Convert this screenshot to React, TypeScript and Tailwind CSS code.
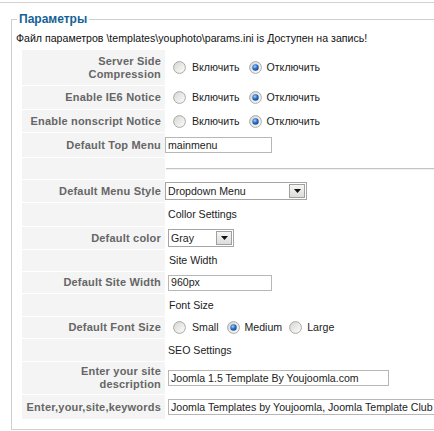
import React from 'react';

const Radio = ({ checked }: { checked?: boolean }) => (
  <svg width="13" height="13" viewBox="0 0 13 13" className="shrink-0">
    <defs>
      <linearGradient id="rg" x1="0" y1="0" x2="1" y2="1">
        <stop offset="0" stopColor="#d4d4cf" />
        <stop offset="1" stopColor="#ffffff" />
      </linearGradient>
      <radialGradient id="dot" cx="0.4" cy="0.35" r="0.75">
        <stop offset="0" stopColor="#a9d6ff" />
        <stop offset="0.45" stopColor="#2f74c8" />
        <stop offset="1" stopColor="#0c3d86" />
      </radialGradient>
    </defs>
    <circle cx="6.5" cy="6.5" r="5.9" fill="url(#rg)" stroke="#a9a9a9" strokeWidth="1" />
    {checked && <circle cx="6.5" cy="6.5" r="3.2" fill="url(#dot)" />}
  </svg>
);

const OnOff = () => (
  <div className="flex items-center pl-[7px]">
    <Radio />
    <span className="ml-[6px]">Включить</span>
    <span className="ml-[9px]"><Radio checked /></span>
    <span className="ml-[5px]">Отключить</span>
  </div>
);

const TextInput = ({ value, w, ml = 'ml-0' }: { value: string; w: string; ml?: string }) => (
  <div className={`${w} ${ml} shrink-0 h-[16px] border border-[#b7b7b7] bg-white flex items-center pl-[2px] whitespace-nowrap overflow-hidden`}>
    {value}
  </div>
);

const Select = ({ value, w, ml = 'ml-0' }: { value: string; w: string; ml?: string }) => (
  <div className={`${w} ${ml} h-[18px] border border-[#a5a5a5] bg-white flex items-stretch`}>
    <span className="flex-1 flex items-center pl-[2px]">{value}</span>
    <span className="w-[16px] m-[1px] border border-[#a0a0a0] bg-gradient-to-b from-[#f6f6f4] to-[#dcdcd8] flex items-center justify-center">
      <svg width="7" height="4" viewBox="0 0 7 4">
        <path d="M0 0h7L3.5 4z" fill="#111" />
      </svg>
    </span>
  </div>
);

type Row = { label: React.ReactNode; value: React.ReactNode };

const rows: Row[] = [
  { label: <>Server Side<br />Compression</>, value: <OnOff /> },
  { label: 'Enable IE6 Notice', value: <OnOff /> },
  { label: 'Enable nonscript Notice', value: <OnOff /> },
  { label: 'Default Top Menu', value: <TextInput value="mainmenu" w="w-[107px]" ml="-ml-[1px]" /> },
  { label: '', value: <div className="w-full border-t border-[#c4c4c4] border-b border-b-[#f0f0f0]" /> },
  { label: 'Default Menu Style', value: <Select value="Dropdown Menu" w="w-[142px]" ml="-ml-[1px]" /> },
  { label: '', value: <span className="pl-[2px]">Collor Settings</span> },
  { label: 'Default color', value: <Select value="Gray" w="w-[66px]" ml="ml-[2px]" /> },
  { label: '', value: <span className="pl-[3px]">Site Width</span> },
  { label: 'Default Site Width', value: <TextInput value="960px" w="w-[104px]" ml="ml-[2px]" /> },
  { label: '', value: <span className="pl-[3px]">Font Size</span> },
  {
    label: 'Default Font Size',
    value: (
      <div className="flex items-center pl-[7px]">
        <Radio />
        <span className="ml-[6px]">Small</span>
        <span className="ml-[8px]"><Radio checked /></span>
        <span className="ml-[5px]">Medium</span>
        <span className="ml-[7px]"><Radio /></span>
        <span className="ml-[5px]">Large</span>
      </div>
    ),
  },
  { label: '', value: <span className="pl-[2px]">SEO Settings</span> },
  { label: <>Enter your site<br />description</>, value: <TextInput value="Joomla 1.5 Template By Youjoomla.com" w="w-[221px]" ml="ml-[2px]" /> },
  { label: 'Enter,your,site,keywords', value: <TextInput value="Joomla Templates by Youjoomla, Joomla Template Club" w="w-[300px]" ml="ml-[2px]" /> },
];

export default function App() {
  return (
    <div className="w-[434px] h-[431px] overflow-hidden bg-white font-['Liberation_Sans',Arial,sans-serif] text-[10.6px] leading-[13px] text-[#222]">
      <div className="w-[600px] mt-[2px] border-t border-[#d3d3d3] pt-[9px] pl-[11px]">
        <fieldset className="border border-[#cfcfcf] pl-[5px] pr-[5px] pb-[10px]">
          <legend className="px-[2px] text-[12px] leading-[15px] font-bold text-[#146295]">Параметры</legend>
          <div className="pt-[5px] -ml-[1px] text-[#111]">
            Файл параметров \templates\youphoto\params.ini is Доступен на запись!
          </div>
          <div className="mt-[5px] ml-[5px] grid grid-cols-[143px_1fr] gap-px grid-rows-[35px_23px_22px_24px_21px_22px_23px_22px_21px_21px_22px_21px_22px_32px_24px]">
            {rows.map((r, i) => (
              <React.Fragment key={i}>
                <div className="bg-[#f4f4f4] text-[#666] text-[11px] font-bold tracking-[0.2px] flex items-center justify-end text-right pr-[4px] whitespace-nowrap">
                  <span>{r.label}</span>
                </div>
                <div className="flex items-center">{r.value}</div>
              </React.Fragment>
            ))}
          </div>
        </fieldset>
      </div>
    </div>
  );
}
